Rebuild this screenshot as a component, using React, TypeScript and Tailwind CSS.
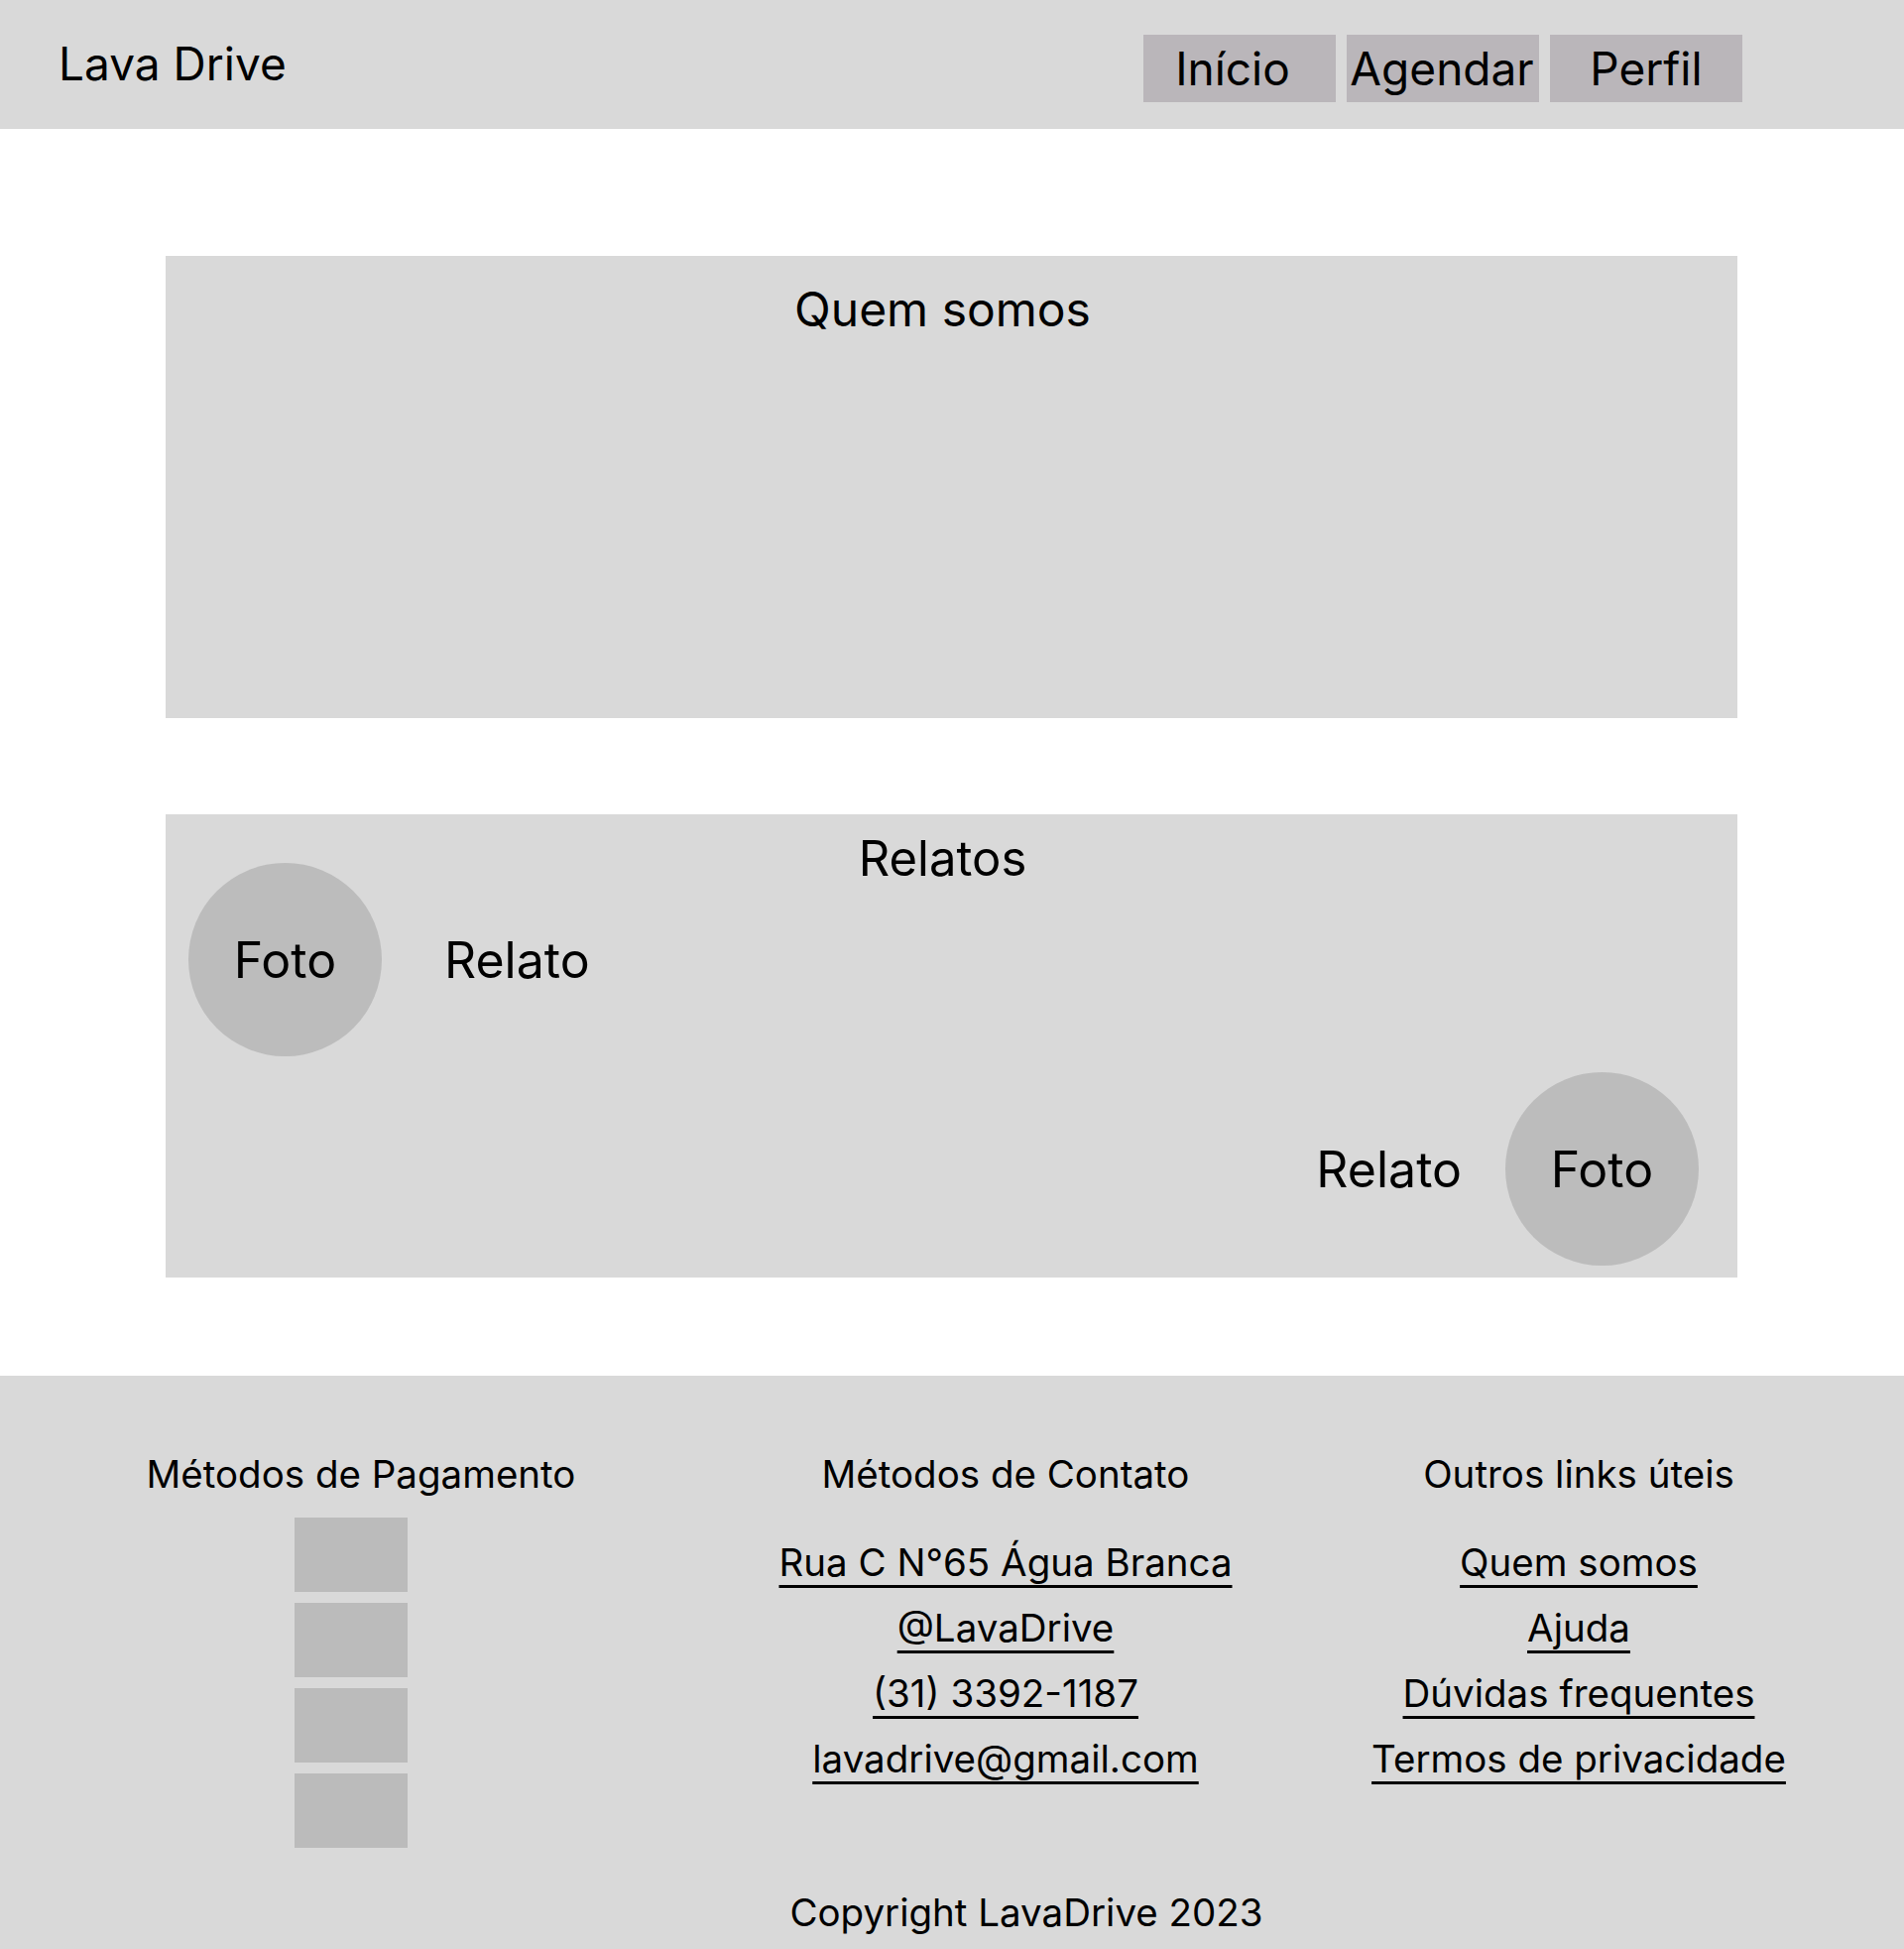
import React from "react";

const contacts = ["Rua C N°65 Água Branca", "@LavaDrive", "(31) 3392-1187", "lavadrive@gmail.com"];
const others = ["Quem somos", "Ajuda", "Dúvidas frequentes", "Termos de privacidade"];

function Foto() {
  return (
    <div className="w-[195px] h-[195px] rounded-full bg-[#bcbcbc] flex items-center justify-center text-[50px] leading-[58px] shrink-0">
      Foto
    </div>
  );
}

const navItems = [
  { t: "Início", c: "pr-[14px]" },
  { t: "Agendar", c: "pr-[2px]" },
  { t: "Perfil", c: "" },
];

export default function App() {
  return (
    <div className="w-[1920px] min-h-[1965px] bg-white text-black font-['Inter',sans-serif] flex flex-col">
      <header className="h-[130px] bg-[#d9d9d9] flex items-start justify-between pt-[35px] pl-[59px] pr-[163px]">
        <div className="text-[46px] leading-[58px]">Lava Drive</div>
        <nav className="flex gap-[11px]">
          {navItems.map((n) => (
            <a
              key={n.t}
              href="#"
              className={
                "w-[194px] h-[68px] bg-[#bab6ba] flex items-center justify-center text-[46px] leading-[58px] whitespace-nowrap " +
                n.c
              }
            >
              {n.t}
            </a>
          ))}
        </nav>
      </header>

      <main className="flex flex-col items-start pt-[128px] pb-[99px] pl-[167px] gap-[97px]">
        <section className="w-[1585px] h-[466px] bg-[#d9d9d9] pt-[25px]">
          <h2 className="text-[48px] leading-[58px] text-center pr-[18px]">Quem somos</h2>
        </section>

        <section className="w-[1585px] h-[467px] bg-[#d9d9d9] pt-[16px] flex flex-col">
          <h2 className="text-[49px] leading-[58px] text-center pr-[18px] -mb-[25px]">Relatos</h2>
          <div className="flex items-center pl-[23px]">
            <Foto />
            <p className="ml-[63px] text-[50px] leading-[58px]">Relato</p>
          </div>
          <div className="flex items-center justify-end pr-[39px] mt-[16px]">
            <p className="mr-[44px] text-[50px] leading-[58px]">Relato</p>
            <Foto />
          </div>
        </section>
      </main>

      <footer className="bg-[#d9d9d9] pt-[76px] pb-[14px] flex-1">
        <div className="grid grid-cols-[728px_572px_1fr] items-start">
          <div className="flex flex-col items-center">
            <h3 className="text-[38.5px] leading-[46px]">Métodos de Pagamento</h3>
            <div className="flex flex-col gap-[11px] mt-[21px] mr-[20px]">
              {[0, 1, 2, 3].map((i) => (
                <div key={i} className="w-[114px] h-[75px] bg-[#bbbbbb]" />
              ))}
            </div>
          </div>
          <div className="flex flex-col items-center">
            <h3 className="text-[38.5px] leading-[46px]">Métodos de Contato</h3>
            <ul className="flex flex-col items-center mt-[33px]">
              {contacts.map((c) => (
                <li key={c} className="text-[38.5px] leading-[66px]">
                  <a href="#" className="underline underline-offset-[9px] decoration-[3px]">
                    {c}
                  </a>
                </li>
              ))}
            </ul>
          </div>
          <div className="flex flex-col items-center pr-[36px]">
            <h3 className="text-[38.5px] leading-[46px]">Outros links úteis</h3>
            <ul className="flex flex-col items-center mt-[33px]">
              {others.map((c) => (
                <li key={c} className="text-[38.5px] leading-[66px]">
                  <a href="#" className="underline underline-offset-[9px] decoration-[3px]">
                    {c}
                  </a>
                </li>
              ))}
            </ul>
          </div>
        </div>
        <p className="mt-[42px] pl-[150px] text-center text-[38.5px] leading-[46px]">Copyright LavaDrive 2023</p>
      </footer>
    </div>
  );
}
